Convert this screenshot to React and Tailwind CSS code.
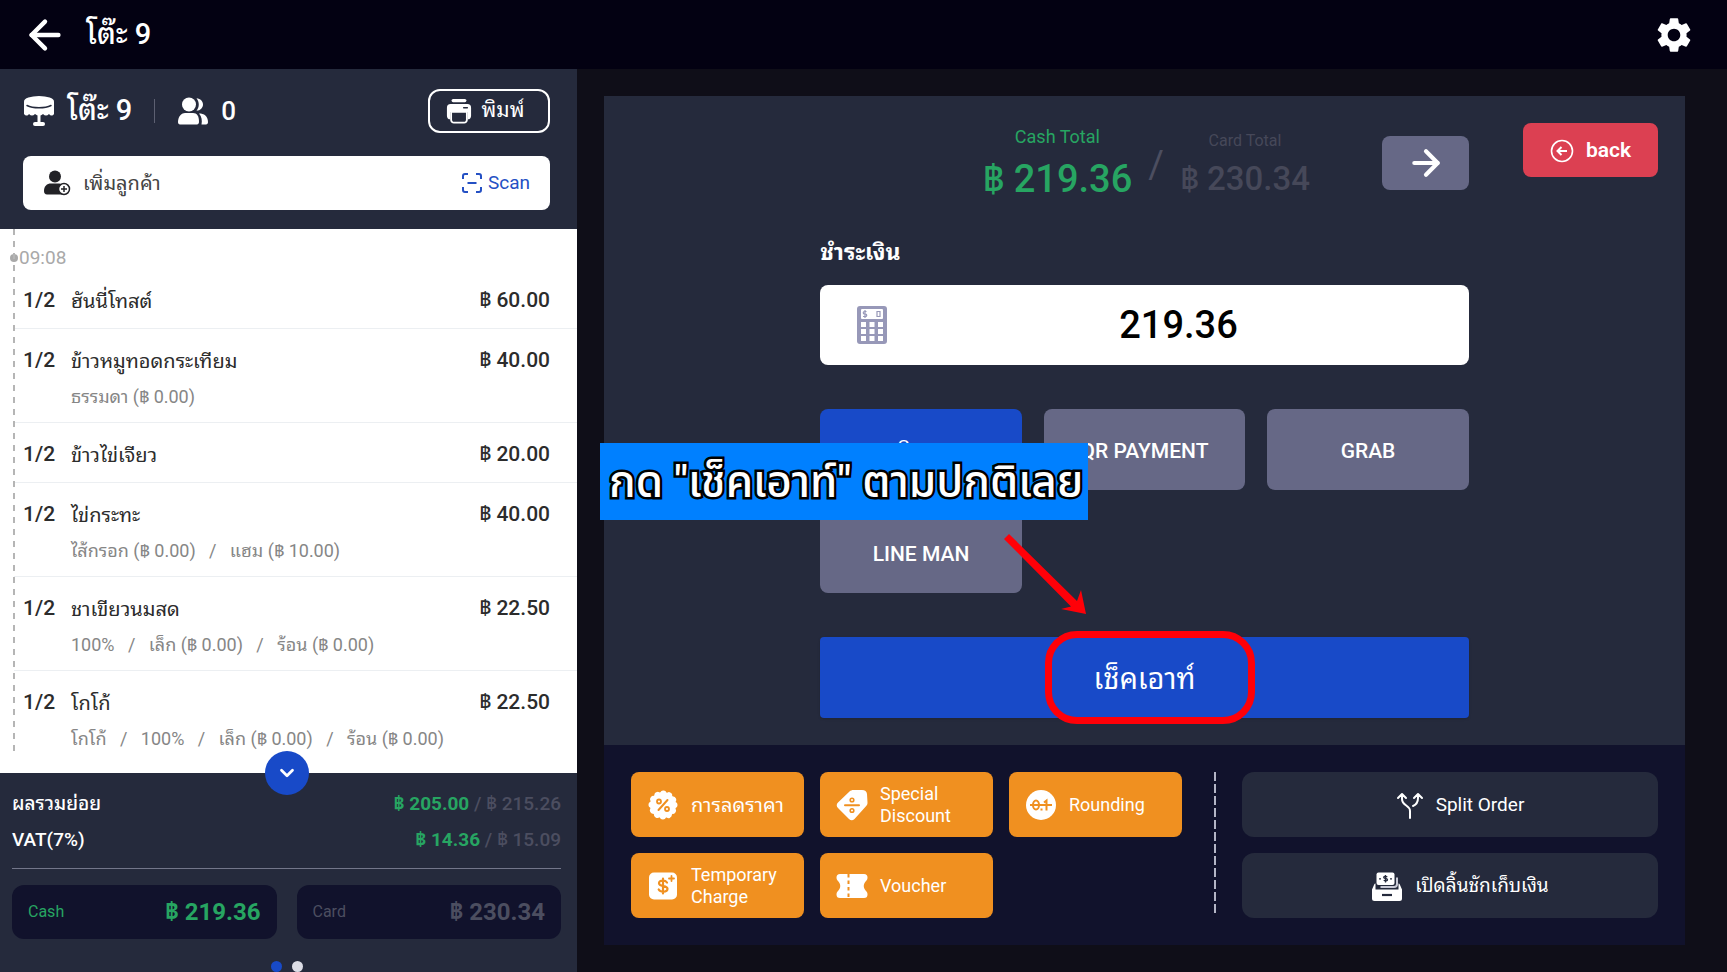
import React from "react";
import { FiArrowLeft, FiArrowRight } from "react-icons/fi";
import { MdSettings } from "react-icons/md";
import { ChevronDown } from "lucide-react";

const orders = [
  { name: "ฮันนี่โทสต์", price: "60.00", options: [] },
  { name: "ข้าวหมูทอดกระเทียม", price: "40.00", options: ["ธรรมดา (฿ 0.00)"] },
  { name: "ข้าวไข่เจียว", price: "20.00", options: [] },
  { name: "ไข่กระทะ", price: "40.00", options: ["ไส้กรอก (฿ 0.00)", "แฮม (฿ 10.00)"] },
  { name: "ชาเขียวนมสด", price: "22.50", options: ["100%", "เล็ก (฿ 0.00)", "ร้อน (฿ 0.00)"] },
  { name: "โกโก้", price: "22.50", options: ["โกโก้", "100%", "เล็ก (฿ 0.00)", "ร้อน (฿ 0.00)"] },
];

const TableIcon = () => (
  <svg className="w-8 h-8" viewBox="0 0 32 32" fill="white">
    <ellipse cx="16" cy="6.500" rx="15" ry="5.500" />
    <path d="M1 7v12c1.500 2 3.500 2 5 0 2 2 4 2 6 0 2.500 2 5.500 2 8 0 2 2 4 2 6 0 1.500 2 3.500 2 5 0V7z" />
    <path d="M4 10.500c6 3 18 3 24 0" stroke="#252a3c" strokeWidth="1.500" fill="none" strokeLinecap="round" />
    <path d="M14.500 19h3v9h-3z" />
    <rect x="10" y="27" width="12" height="4" rx="2" />
  </svg>
);

const PeopleIcon = () => (
  <svg className="w-8 h-8" viewBox="0 0 32 32" fill="white">
    <circle cx="12" cy="9.500" r="7" />
    <path d="M1 27c0-6 4-9 7-9h8c4 0 6 3 6 9 0 1.500-1 2.500-2 2.500H3c-1.300 0-2-1-2-2.500z" />
    <path d="M19.500 3.200c4 .3 6.500 3 6.500 6.300s-2.500 6-6.500 6.300c3-3.800 3-8.800 0-12.600z" />
    <path d="M22 18.500c5 0 9 2.500 9 8.500 0 1.500-.7 2.500-2 2.500h-4.500c.8-4 .3-8-2.500-11z" />
  </svg>
);

const PrinterIcon = () => (
  <svg className="w-[26px] h-7" viewBox="0 0 28 28" fill="white">
    <rect x="6" y="1" width="16" height="3.500" rx="1.700" />
    <path d="M5 6.500h18a4 4 0 0 1 4 4V19c0 2.500-1.500 4-3.500 4V15h-19v8C2.500 23 1 21.500 1 19v-8.500a4 4 0 0 1 4-4z" />
    <path d="M5.500 15h17v8.500a3 3 0 0 1-3 3h-11a3 3 0 0 1-3-3z" fill="#252a3c" stroke="white" strokeWidth="2" />
    <path d="M19 10.500h4" stroke="#252a3c" strokeWidth="1.500" strokeLinecap="round" />
  </svg>
);

const AddUserIcon = () => (
  <svg className="w-7 h-7" viewBox="0 0 28 28" fill="#222226">
    <circle cx="12" cy="7.500" r="6" />
    <path d="M1 22c0-5 3-7.500 7-7.500h8c2 0 4 1 5 2.500v8.500H4c-2 0-3-1.500-3-3.500z" />
    <circle cx="21" cy="20" r="5.500" fill="white" stroke="#222226" strokeWidth="1.500" />
    <path d="M21 17v6M18 20h6" stroke="#222226" strokeWidth="1.500" />
  </svg>
);

const ScanIcon = () => (
  <svg className="w-5 h-5" viewBox="0 0 20 20" fill="none" stroke="#2450c4" strokeWidth="2">
    <path d="M1 6V3a2 2 0 0 1 2-2h3M14 1h3a2 2 0 0 1 2 2v3M19 14v3a2 2 0 0 1-2 2h-3M6 19H3a2 2 0 0 1-2-2v-3M5.500 10h9" />
  </svg>
);

const BackIcon = () => (
  <svg className="w-6 h-6" viewBox="0 0 24 24" fill="none" stroke="white" strokeWidth="1.600">
    <circle cx="12" cy="12" r="10.500" />
    <path d="M17 12H8M11.500 8l-4 4 4 4" strokeWidth="2" />
  </svg>
);

const CalculatorIcon = () => (
  <svg className="w-8 h-10 shrink-0" viewBox="0 0 32 40">
    <rect x="1" y="1" width="30" height="38" rx="3" fill="#9798b8" />
    <rect x="5" y="4" width="22" height="10" rx="1" fill="white" />
    <path d="M10.500 6.500H8.500a1 1 0 0 0 0 2.500h1a1 1 0 0 1 0 2.500H7M9 5v8M21 6.500h3v5h-3z" fill="none" stroke="#9798b8" strokeWidth="1.200" />
    <path d="M5 17h5v5H5zM13.500 17h5v5h-5zM22 17h5v5h-5zM5 24h5v5H5zM13.500 24h5v5h-5zM22 24h5v5h-5zM5 31h5v5H5zM13.500 31h5v5h-5zM22 31h5v5h-5z" fill="white" />
  </svg>
);

const PercentIcon = () => (
  <svg className="w-8 h-8 shrink-0" viewBox="0 0 32 32">
    <circle cx="16" cy="16" r="13" fill="white" />
    <circle cx="16" cy="16" r="11.500" fill="none" stroke="white" strokeWidth="6" strokeDasharray="0.010 6.012" strokeLinecap="round" />
    <path d="M20.500 11l-9 10" stroke="#f09020" strokeWidth="2" strokeLinecap="round" />
    <circle cx="12" cy="12.500" r="2" fill="none" stroke="#f09020" strokeWidth="1.800" />
    <circle cx="20" cy="20" r="2" fill="none" stroke="#f09020" strokeWidth="1.800" />
  </svg>
);

const TagIcon = () => (
  <svg className="w-8 h-8 shrink-0" viewBox="0 0 32 32">
    <path d="M13.500 2.500c1-1 2.500-1.500 4-1.500h8.500c3 0 4.700 1.500 5 4l.5 8.500c.1 1.500-.4 2.500-1.300 3.500L18.500 30c-1.800 1.700-3.700 1.700-5.500 0l-11-11c-1.700-1.800-1.700-3.700 0-5.500z" fill="white" />
    <path d="M9 16.200h14" stroke="#f09020" strokeWidth="2" strokeLinecap="round" />
    <circle cx="16" cy="11" r="1.800" fill="none" stroke="#f09020" strokeWidth="1.600" />
    <circle cx="16" cy="21.500" r="1.800" fill="none" stroke="#f09020" strokeWidth="1.600" />
  </svg>
);

const RoundingIcon = () => (
  <svg className="w-8 h-8 shrink-0" viewBox="0 0 32 32">
    <circle cx="16" cy="16" r="15" fill="white" />
    <g fill="none" stroke="#f09020" strokeWidth="2">
      <ellipse cx="11" cy="16" rx="3" ry="4.500" />
      <path d="M16.500 19.500v2M19 13.500l2.500-2v10M5 16h22" />
    </g>
  </svg>
);

const ChargeIcon = () => (
  <svg className="w-8 h-8 shrink-0" viewBox="0 0 32 32">
    <rect x="2" y="2.500" width="28" height="27" rx="5" fill="white" />
    <g fill="none" stroke="#f09020" strokeWidth="2.200" strokeLinecap="round">
      <path d="M20 12.500c-1-1.500-2.500-2-4-2-2.500 0-4 1-4 2.800 0 4 8.500 1.700 8.500 5.500 0 1.800-1.800 2.900-4.300 2.900-2 0-3.700-.8-4.500-2.200M16 8.500v15" />
      <path d="M24.500 6v5M22 8.500h5" strokeWidth="1.800" />
    </g>
  </svg>
);

const VoucherIcon = () => (
  <svg className="w-8 h-8 shrink-0" viewBox="0 0 32 32">
    <path d="M4 4h24a3.500 3.500 0 0 1 3.500 3.500c0 1.500-.5 2.500-1.500 3.500-3 3-3 7 0 10 1 1 1.500 2 1.500 3.500A3.500 3.500 0 0 1 28 28H4a3.500 3.500 0 0 1-3.500-3.500c0-1.500.5-2.500 1.500-3.500 3-3 3-7 0-10-1-1-1.500-2-1.500-3.500A3.500 3.500 0 0 1 4 4z" fill="white" />
    <path d="M12.500 4v24" stroke="#f09020" strokeWidth="2" strokeDasharray="3.500 3" />
  </svg>
);

const SplitIcon = () => (
  <svg className="w-7 h-7" viewBox="0 0 28 28" fill="none" stroke="white" strokeWidth="2" strokeLinecap="round" strokeLinejoin="round">
    <path d="M14 26V19c0-6-8-5-8-12V3M2 6l4-4 4 4M17 14c4-1.500 5-4 5-8V3M18 6l4-4 4 4" />
  </svg>
);

const DrawerIcon = () => (
  <svg className="w-8 h-8" viewBox="0 0 32 32" fill="white">
    <rect x="5.500" y="1.500" width="18" height="12.500" rx="2" />
    <path d="M26 6.500V13a3 3 0 0 1-3 3H9.500" fill="none" stroke="#c9cad6" strokeWidth="2" />
    <path d="M4.500 12.500v6h23v-6c.7 0 1 .4 1.300 1l2.200 5v9a2.500 2.500 0 0 1-2.500 2.500h-25A2.500 2.500 0 0 1 1 27.500v-9l2.200-5c.3-.6.6-1 1.300-1z" />
    <path d="M11 24h10" stroke="#252a3c" strokeWidth="2.200" />
    <path d="M16.300 5.800c-2-1-3.600-.3-3.600.6 0 1.600 3.800.6 3.800 2.300 0 1.100-2.200 1.600-3.800.6M14.500 4v7.500M8 7.800h2M19 7.800h2" fill="none" stroke="#252a3c" strokeWidth="1.300" />
  </svg>
);

const discounts = [
  { label: "การลดราคา", size: "text-xl", icon: <PercentIcon /> },
  { label: "Special Discount", size: "text-lg", icon: <TagIcon /> },
  { label: "Rounding", size: "text-lg", icon: <RoundingIcon /> },
  { label: "Temporary Charge", size: "text-lg", icon: <ChargeIcon /> },
  { label: "Voucher", size: "text-lg", icon: <VoucherIcon /> },
];

const OrderPanel = () => (
  <aside className="w-[577px] shrink-0 flex flex-col bg-[#252a3c]">
    <div className="h-40 pl-[23px] pr-[27px] pt-5">
      <div className="flex items-center h-11 text-[29px] font-medium">
        <TableIcon />
        <span className="ml-3">โต๊ะ 9</span>
        <span className="w-px h-6 bg-[#5d6072] mx-[22px]" />
        <PeopleIcon />
        <span className="ml-3 text-[26px]">0</span>
        <button className="ml-auto w-[122px] h-11 pr-2 flex items-center justify-center gap-[10px] border-2 border-white rounded-xl text-[21px] font-normal">
          <PrinterIcon />
          พิมพ์
        </button>
      </div>
      <div className="mt-[23px] h-[54px] bg-white rounded-lg flex items-center px-5 text-xl text-[#444]">
        <AddUserIcon />
        <button className="ml-3 flex-1 text-left">เพิ่มลูกค้า</button>
        <button className="flex items-center gap-[6px] text-[19px] text-[#2450c4]">
          <ScanIcon />
          Scan
        </button>
      </div>
    </div>

    <div className="h-[544px] bg-white text-[#2c2c2c] relative">
      <div className="absolute left-[13px] top-0 h-[522px] w-[2px] bg-[repeating-linear-gradient(to_bottom,#b5b5b5_0_6px,transparent_6px_12px)]" />
      <div className="h-10 pt-[18px] pl-[10px] flex items-center text-[19px] text-[#a9a9a9]">
        <span className="w-2 h-2 rounded-full bg-[#a9a9a9] mr-px" />
        09:08
      </div>
      <ul className="pl-[14px]">
        {orders.map((item, i) => (
          <li key={i} className="pl-[9px] pr-[27px] pt-4 pb-[11px] border-b border-[#eceff2] last:border-b-0">
            <div className="flex h-8 items-center text-xl">
              <span className="w-12 text-[21px] font-medium">1/2</span>
              <span className="flex-1">{item.name}</span>
              <span className="text-[21px] font-medium">฿ {item.price}</span>
            </div>
            {item.options.length > 0 && (
              <p className="pl-12 h-[34px] pt-1 leading-8 text-[18px] text-[#868686] whitespace-pre">
                {item.options.join("   /   ")}
              </p>
            )}
          </li>
        ))}
      </ul>
    </div>

    <div className="relative flex-1 px-3 pt-[13px]">
      <button className="absolute -top-[22px] left-[265px] w-11 h-11 rounded-full bg-[#184ac8] flex items-center justify-center" aria-label="collapse">
        <ChevronDown size={22} strokeWidth={3} />
      </button>
      <div className="mr-1">
        <div className="flex justify-between items-center h-9 text-[19px] font-medium">
          <span>ผลรวมย่อย</span>
          <span className="text-[#4c4e60]">
            <b className="font-bold text-[#27a562]">฿ 205.00</b> / ฿ 215.26
          </span>
        </div>
        <div className="flex justify-between items-center h-9 text-[19px] font-medium">
          <span>VAT(7%)</span>
          <span className="text-[#4c4e60]">
            <b className="font-bold text-[#27a562]">฿ 14.36</b> / ฿ 15.09
          </span>
        </div>
        <hr className="mt-[10px] border-[#73768a]" />
        <div className="mt-4 grid grid-cols-2 gap-5">
          <div className="h-[54px] rounded-xl bg-[#11122c] px-4 flex items-center justify-between text-[#27a562]">
            <span>Cash</span>
            <b className="text-2xl">฿ 219.36</b>
          </div>
          <div className="h-[54px] rounded-xl bg-[#11122c] px-4 flex items-center justify-between text-[#4c4e60]">
            <span>Card</span>
            <b className="text-2xl">฿ 230.34</b>
          </div>
        </div>
        <div className="mt-[22px] flex justify-center gap-[10px]">
          <span className="w-[11px] h-[11px] rounded-full bg-[#184ac8]" />
          <span className="w-[11px] h-[11px] rounded-full bg-[#dcdde6]" />
        </div>
      </div>
    </div>
  </aside>
);

const Payment = () => (
  <section className="bg-[#252a3c] h-[649px] pt-[27px]">
    <div className="flex justify-end pr-[27px] h-[109px]">
      <div className="text-center text-[#27a562]">
        <p className="text-lg leading-7">Cash Total</p>
        <p className="text-[38px] leading-[56px] font-medium">฿ 219.36</p>
      </div>
      <span className="mt-5 mx-4 text-[38px] leading-11 text-[#4c4e60]">/</span>
      <div className="text-center text-[#464859]">
        <p className="text-base leading-9">Card Total</p>
        <p className="text-[33px] leading-10 font-medium">฿ 230.34</p>
      </div>
      <button className="mt-[13px] ml-[72px] w-[87px] h-[54px] rounded-lg bg-[#666886] flex items-center justify-center" aria-label="next">
        <FiArrowRight size={40} strokeWidth={2.5} />
      </button>
      <button className="ml-[54px] w-[135px] h-[54px] pt-[2px] rounded-lg bg-[#dc4052] flex items-center justify-center gap-3 text-[21px] font-semibold">
        <BackIcon />
        back
      </button>
    </div>

    <div className="w-3/5 mx-auto">
      <label htmlFor="amount" className="block h-[53px] leading-[42px] text-[23px] font-bold">
        ชำระเงิน
      </label>
      <div className="h-20 rounded-lg bg-white flex items-center pl-9">
        <CalculatorIcon />
        <input id="amount" defaultValue="219.36" className="w-full min-w-0 text-center text-[38px] font-medium text-black outline-none" />
      </div>

      <div className="relative mt-11">
        <div className="grid grid-cols-3 gap-[22px] text-[21px] font-medium">
          <button className="h-[81px] pt-1 rounded-lg bg-[#184ac8]">เงินสด</button>
          <button className="h-[81px] pt-1 rounded-lg bg-[#666886]">QR PAYMENT</button>
          <button className="h-[81px] pt-1 rounded-lg bg-[#666886]">GRAB</button>
          <button className="h-[81px] pt-1 rounded-lg bg-[#666886]">LINE MAN</button>
        </div>
        {/* hint over the payment methods */}
        <div className="absolute -left-[220px] top-[34px] w-[488px] h-[77px] pl-1 bg-[#0080ff] flex items-center justify-center font-[Roboto,'Noto_Sans_Thai','Noto_Sans',sans-serif] text-[44px] font-medium whitespace-nowrap [-webkit-text-stroke:5px_black] [paint-order:stroke_fill]">
          กด "เช็คเอาท์" ตามปกติเลย
        </div>
        <svg className="absolute left-[180px] top-[120px] w-[92px] h-[90px]" viewBox="0 0 92 90" fill="#ff0008">
          <path d="M4 10 9 5 77 72 81 61 86 85 61 80 71 77.500z" />
        </svg>
      </div>

      <button className="relative mt-11 w-full h-[81px] pt-1 rounded bg-[#184ac8] text-[29px] shadow">
        เช็คเอาท์
        <span className="absolute -inset-y-[6px] left-[225px] w-[210px] border-[7px] border-[#ff0008] rounded-[32px]" />
      </button>
    </div>
  </section>
);

const Actions = () => (
  <section className="bg-[#11122c] h-[200px] px-[27px] pt-[27px] flex">
    <div className="grid grid-cols-[173px_173px_173px] auto-rows-[65px] gap-4">
      {discounts.map((d) => (
        <button key={d.label} className="rounded-lg bg-[#f09020] flex items-center pl-4 pr-3 gap-3 text-left">
          {d.icon}
          <span className={`${d.size} leading-[22px]`}>{d.label}</span>
        </button>
      ))}
    </div>
    <div className="ml-8 mr-[26px] h-36 w-[2px] bg-[repeating-linear-gradient(to_bottom,#b4b5c6_0_9px,transparent_9px_12px)]" />
    <div className="flex-1 flex flex-col gap-4 text-[19px]">
      <button className="h-[65px] pl-5 pt-[2px] rounded-xl bg-[#252a3c] flex items-center justify-center gap-3">
        <SplitIcon />
        Split Order
      </button>
      <button className="h-[65px] pl-5 pt-[2px] rounded-xl bg-[#252a3c] flex items-center justify-center gap-3">
        <DrawerIcon />
        เปิดลิ้นชักเก็บเงิน
      </button>
    </div>
  </section>
);

const App = () => {
  return (
    <div className="h-screen flex flex-col overflow-hidden bg-[#0f0e18] text-white font-[Roboto,'Noto_Sans_Thai_Looped','Noto_Looped_Thai',Loma,Waree,Garuda,'Noto_Sans_Thai','Noto_Sans',sans-serif]">
      <header className="h-[69px] shrink-0 bg-[#030112] flex items-center pl-[22px] pr-8">
        <button aria-label="go back">
          <FiArrowLeft size={46} strokeWidth={2.3} />
        </button>
        <h1 className="ml-[18px] text-[29px] font-medium">โต๊ะ 9</h1>
        <button className="ml-auto" aria-label="settings">
          <MdSettings size={42} />
        </button>
      </header>
      <div className="flex flex-1 min-h-0">
        <OrderPanel />
        <main className="flex-1 pl-[27px] pr-[42px] pt-[27px]">
          <Payment />
          <Actions />
        </main>
      </div>
    </div>
  );
};

export default App;
